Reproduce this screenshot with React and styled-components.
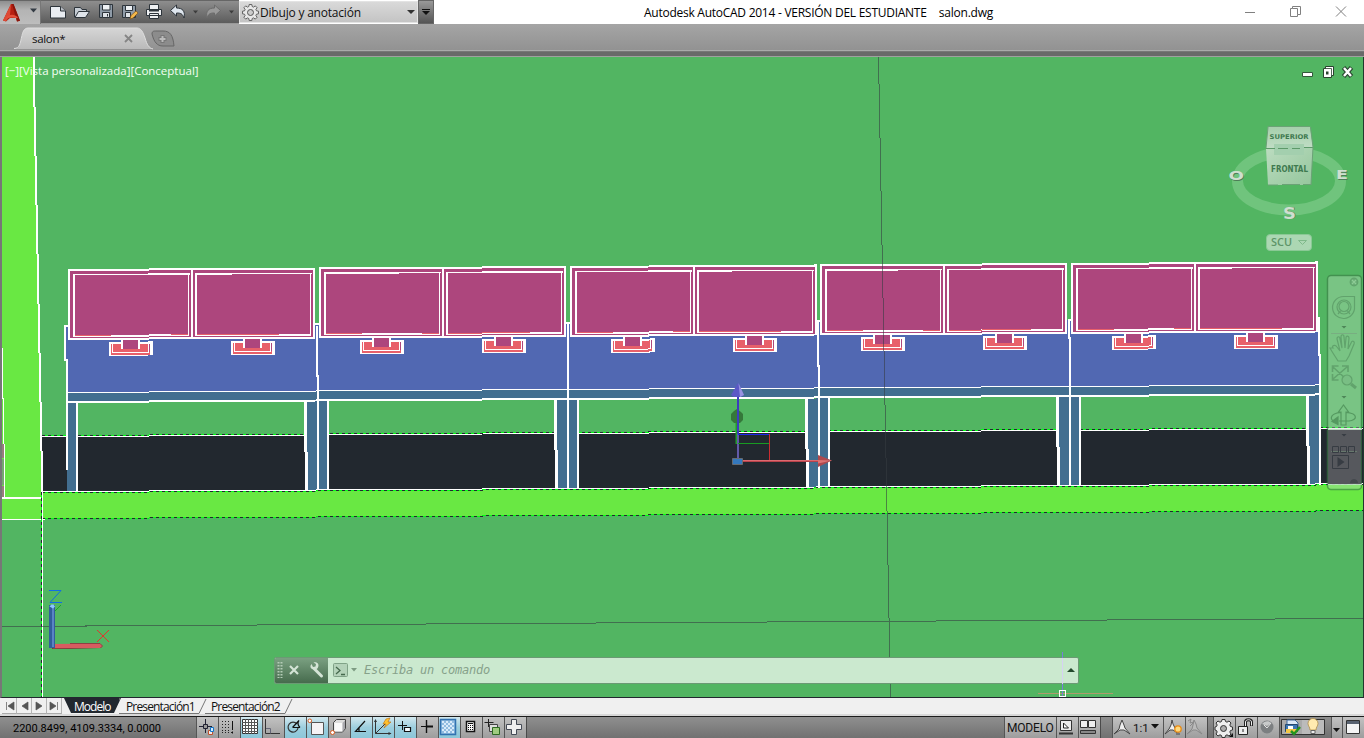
import React from "react";
import styled, { createGlobalStyle, css } from "styled-components";

const Global = createGlobalStyle`
  * { box-sizing: border-box; }
  body { margin: 0; overflow: hidden; background: #fff; }
  svg { display: block; flex: none; }
`;

const Window = styled.div`
  width: 1364px;
  height: 738px;
  display: flex;
  flex-direction: column;
  font-family: "Open Sans", "Noto Sans", sans-serif;
  font-size: 11.5px;
  color: #111;
  white-space: nowrap;
  overflow: hidden;
`;

/* ---------- title bar ---------- */
const TitleBar = styled.header`
  height: 24px;
  display: flex;
  background: #fff;
  flex: none;
`;
const AppButton = styled.div`
  width: 41px;
  height: 24px;
  border-top: 1px solid #666;
  border-right: 1px solid #777;
  background: linear-gradient(#8f8f8f, #b4b4b4 40%, #bdbdbd);
`;
const QuickAccess = styled.div`
  width: 198px;
  height: 24px;
  background: linear-gradient(#8e8e8e, #5c5c5c);
  border-top: 1px solid #666;
  border-bottom: 1px solid #999;
`;
const Workspace = styled.div`
  width: 179px;
  height: 22px;
  margin-top: 1px;
  display: flex;
  align-items: center;
  background: linear-gradient(#d9d9d9, #c4c4c4);
  border: 1px solid #e3e3e3;
  padding-left: 2px;
  font-size: 12px;
  letter-spacing: -0.2px;
  gap: 1px;
`;
const Grow = styled.span`
  flex: 1;
`;
const QuickMenu = styled.div`
  width: 16px;
  height: 24px;
  border: 1px solid #666;
  background: linear-gradient(#999, #555);
`;
const Caption = styled.div`
  display: flex;
  align-items: center;
  margin-left: 210px;
  width: 349px;
  gap: 12px;
  color: #000;
  font-size: 12px;
`;
const CaptionText = styled.span`
  letter-spacing: ${(p) => p.$spacing}px;
`;
const WindowButtons = styled.div`
  margin-left: auto;
`;

/* ---------- document tabs ---------- */
const FileTabs = styled.nav`
  height: 27px;
  flex: none;
  display: flex;
  background: linear-gradient(#a5a5a5, #929292);
  border-bottom: 1px solid #aaa;
`;
const FileTab = styled.div`
  display: grid;
  width: 178px;
  height: 26px;
  > * { grid-area: 1 / 1; }
`;
const FileTabName = styled.span`
  padding: 7px 0 0 32px;
  font-size: 11.5px;
  letter-spacing: -0.3px;
  z-index: 1;
`;
const Divider = styled.div`
  height: 6px;
  flex: none;
  background: #696969;
  border-bottom: 1px solid #a0a0a0;
  border-top: 1px solid #777;
`;

/* ---------- viewport ---------- */
const Viewport = styled.main`
  position: relative;
  height: 641px;
  flex: none;
  border-left: 2px solid #777;
  border-right: 1px solid #1e3a2c;
  border-bottom: 1px solid #22282f;
  background: #52b562;
`;
const ViewLabel = styled.div`
  position: absolute;
  left: 3px;
  top: 6px;
  color: #f4fff4;
  font-size: 11.5px;
  line-height: 16px;
  letter-spacing: 0px;
`;
const Overlay = styled.div`
  position: absolute;
  left: ${(p) => p.$x}px;
  top: ${(p) => p.$y}px;
`;
const CommandLine = styled.div`
  position: absolute;
  left: 272px;
  top: 600px;
  width: 805px;
  height: 27px;
  display: flex;
  border: 1px solid #6b9a74;
  border-radius: 2px;
  background: #cbe9cf;
  overflow: hidden;
`;
const CommandGrip = styled.div`
  width: 53px;
  background: linear-gradient(#7aa081, #466b4d);
`;
const CommandPrompt = styled.div`
  width: 33px;
`;
const CommandText = styled.span`
  flex: 1;
  font: italic 12px/24px "DejaVu Sans Mono", monospace;
  letter-spacing: -0.22px;
  color: #86a18a;
  padding-left: 3px;
`;

/* ---------- layout tabs ---------- */
const LayoutTabs = styled.div`
  height: 18px;
  flex: none;
  display: flex;
  background: #f0f0f0;
  border-bottom: 2px solid #d8d8d8;
  padding-left: 2px;
`;
const LayoutNav = styled.div`
  width: 15px;
  height: 16px;
  border-right: 1px solid #b5b5b5;
  border-bottom: 1px solid #aaa;
`;
const LayoutTab = styled.div`
  display: grid;
  width: ${(p) => p.$w}px;
  font-size: 12px;
  line-height: 17px;
  letter-spacing: ${(p) => p.$ls || -0.85}px;
  color: ${(p) => (p.$active ? "#fff" : "#111")};
  > * { grid-area: 1 / 1; }
`;
const LayoutName = styled.span`
  z-index: 1;
  padding-left: ${(p) => p.$pad}px;
`;

/* ---------- status bar ---------- */
const StatusBar = styled.footer`
  height: 22px;
  flex: none;
  display: flex;
  border-top: 1px solid #1c1c1c;
  background: linear-gradient(#8f8f8f, #717171);
`;
const Coordinates = styled.div`
  width: 196px;
  padding-left: 13px;
  font: 11px/23px Roboto, "Liberation Sans", sans-serif;
  letter-spacing: -0.01px;
  color: #000;
`;
const StatusButton = styled.div`
  width: ${(p) => p.$w || 22}px;
  height: 21px;
  overflow: hidden;
  display: flex;
  border-left: 1px solid #555;
  background: linear-gradient(#c2c2c2, #9d9d9d);
  ${(p) =>
    p.$on &&
    css`
      background: linear-gradient(#d3e8ef, #9ccede 50%, #8cc6d8);
    `}
`;
const StatusText = styled.span`
  font: ${(p) => p.$size || 12}px/22px Roboto, "Liberation Sans", sans-serif;
  padding-left: ${(p) => p.$pad || 0}px;
  letter-spacing: ${(p) => p.$ls || 0}px;
`;
const Gap = styled.div`
  width: ${(p) => p.$w}px;
  border-left: 1px solid #4a4a4a;
`;
const Tray = styled.div`
  width: 52px;
  border-left: 1px solid #555;
`;

/* ---------- drawing ---------- */
const GREEN = "#52b562", LIME = "#69e843", DARK = "#22282f";
const MAGENTA = "#ad467d", BLUE = "#5168b2", TEAL = "#426e90", PINK = "#e8606a";

function Bracket({ x }) {
  return (
    <g>
      <path d={`M${x} 342h44v14h-44z`} fill="#fff" />
      <path d={`M${x + 2} 344h39v11h-39z`} fill={PINK} />
      <path d={`M${x + 3} 344h1v9h-1zM${x + 39} 344h1v9h-1zM${x + 3} 352h37v1h-37z`} fill="#fff" />
      <path d={`M${x + 40} 344h1v8h-1z`} fill={MAGENTA} />
      <path d={`M${x + 12} 340h19v9h-19z`} fill="#fff" />
      <path d={`M${x + 14} 340h15v9h-15z`} fill={MAGENTA} />
      <path d={`M${x + 10} 339h23v1h-23z`} fill="#fff" />
    </g>
  );
}

function Bench({ x }) {
  return (
    <g>
      <path d={`M${x} 269h247v71h-247z`} fill="#fff" />
      <path d={`M${x + 2} 271h121v67h-121zM${x + 125} 271h120v67h-120z`} fill={MAGENTA} />
      <path d={`M${x + 5} 274h117v1.500h-117zM${x + 5} 274h2v62h-2zM${x + 120} 274h1v62h-1zM${x + 5} 335h116v2h-116z`} fill="#fff" />
      <path d={`M${x + 127} 274h117v1.500h-117zM${x + 127} 274h2v62h-2zM${x + 242} 274h1v62h-1zM${x + 127} 335h116v2h-116z`} fill="#fff" />
      <path d={`M${x + 7} 335h36v1h-36zM${x + 103} 335h17v1h-17zM${x + 129} 335h82v1h-82z`} fill={PINK} />
      <Bracket x={x + 41} />
      <Bracket x={x + 163} />
    </g>
  );
}

const legs = [65, 316, 566, 817, 1068, 1318];
const benches = [68, 319, 570, 820, 1071];

function Scene() {
  return (
    <svg width="1361" height="640" viewBox="2 57 1361 640" shapeRendering="crispEdges">
      <path d="M2 57h1361v640H2z" fill={GREEN} />
      <g transform="matrix(1 -0.006 0 1 0 0.4)">
        <path d="M42 436h1325v56H42z" fill={DARK} />
        <path d="M42 492h1325v27H42z" fill={LIME} />
        <path d="M42 436h1325v1H42zM42 491h1325v1H42z" fill="#fff" />
        <path d="M42 435.5h1325M42 492.5h1325M42 518.5h1325" stroke="#00ff12" />
        <path d="M42 435.5h1325M42 492.5h1325M42 518.5h1325" stroke={DARK} strokeDasharray="3 3" />
        <path d="M66 326h1253v66H66z" fill={BLUE} />
        <path d="M66 392h1254v11H66z" fill={TEAL} />
        <path d="M66 392h1254v1H66zM66 401h1254v2H66z" fill="#fff" />
        <path d="M64 326h4M315 326h4M566 326h4M817 326h4M1068 326h3M1317 326h3" stroke="#fff" strokeWidth="2" />
        {legs.map((x, i) => (
          <g key={x}>
            {i > 0 && <path d={`M${x - 12} 403h3v50h1v38h-3v-38h-1z`} fill="#fff" />}
            {i > 0 && <path d={`M${x - 9} 403h11v88h-10v-38h-1z`} fill={TEAL} />}
            {i < 5 && <path d={`M${x + 2} 403h9v88h-9z`} fill={TEAL} />}
            {i < 5 && <path d={`M${x + 11} 403h2v88h-2z`} fill="#fff" />}
          </g>
        ))}
        {benches.map((x) => <Bench key={x} x={x} />)}
      </g>
      <path d="M65 326v34h2v110M317 326v50h1v114M568 322v166M818 322v44h1v122M1068.500 320v18h1v148M1318.500 318v37h1.500v130" fill="none" stroke="#fff" strokeWidth="2" />
      <path d="M2 57h31l9 442v20H2z" fill={LIME} />
      <path d="M33.500 57l9 442" stroke="#fff" strokeWidth="2" />
      <path d="M2 498h41" stroke="#fff" strokeWidth="2" />
      <path d="M2 519.500h43" stroke="#fff" />
      <path d="M2.500 348v50h1v46h1v54" stroke="#fff" fill="none" />
      <path d="M2 444h2v14H2zM2 486h2v11H2z" fill="#987c7c" />
      <path d="M2 459h2v26H2z" fill="#75a870" />
      <path d="M42.500 491v206" stroke="#fff" />
      <path d="M41.500 492v205" stroke="#00ff12" />
      <path d="M41.500 492v205" stroke={DARK} strokeDasharray="3 3" />
      <path d="M878.500 57L890.500 697M2 626.500L1363 618.500" stroke="#353d42" strokeOpacity=".58" />

      {/* gizmo */}
      <g shapeRendering="auto">
        <path d="M736.500 410v34" stroke="#239c2a" strokeWidth="2" />
        <path d="M731 414l3-3 3-2 4 3 2 2v6l-3 3h-6l-3-3z" fill="#35783a" />
        <path d="M738 395v39" stroke="#3c3dbd" strokeWidth="2" />
        <path d="M738 434v27" stroke="#6259a8" strokeWidth="2" />
        <path d="M738 434.500h31" stroke="#1c29ee" />
        <path d="M738 443.500h31" stroke="#189b22" />
        <path d="M769.500 434v27" stroke="#cc2c30" />
        <path d="M738 383l6 12-3 2h-7l-3-2z" fill="#5b58c6" />
        <path d="M738.500 383l5.500 12-4 2z" fill="#9792df" />
        <path d="M742 461h77" stroke="#b9434b" strokeWidth="2" />
        <path d="M742 460.500h77" stroke="#dc6970" />
        <path d="M818 455l14 5.500-14 6.500z" fill="#ae494d" />
        <path d="M818 460l14 .5-14 3z" fill="#dc7474" />
        <path d="M732.500 458.500h10v6h-10z" fill="#3478bd" stroke="#666b71" />
      </g>
      {/* UCS icon */}
      <g shapeRendering="auto">
        <path d="M52 647l49-1v2l-32 1H52z" fill="#783a3a" />
        <path d="M53 644l47-.5 2.500 2.500-2 2-47.500.3z" fill="#d85c60" />
        <path d="M70 643.500h30l2.500 2.500-2 2" stroke="#8e4144" fill="none" />
        <path d="M49 605h6v43h-6z" fill="#315d9c" />
        <path d="M53 606v41" stroke="#5983c4" strokeWidth="2" />
        <path d="M49.500 606.500l2-2h2l1.500 2-2 2z" fill="#8bc5ff" />
        <path d="M49 590.500h12L50 602.500h12" fill="none" stroke="#116ce5" />
        <path d="M55 611l6-6" stroke="#19a725" />
        <path d="M97 630l12 12M109 630l-12 12" stroke="#e2342e" />
      </g>
    </svg>
  );
}

function Cursor() {
  return (
    <svg width="78" height="47" viewBox="0 0 78 47" shapeRendering="crispEdges">
      <path d="M0 42.500h75" stroke="#b09a6c" />
      <path d="M24.500 1v45" stroke="#777ddc" />
      <path d="M24.500 7v26" stroke="#d6d2f3" />
      <path d="M21.500 39.500h6v6h-6z" fill="none" stroke="#fff" />
    </svg>
  );
}

function DocButtons() {
  return (
    <svg width="54" height="16" viewBox="0 0 54 16">
      <path d="M2.500 8.500h10v4h-10z" fill="#fff" stroke="#33583b" />
      <path d="M25.500 2.500h8v9h-2v2h-8v-9h2z" fill="#fff" stroke="#29432f" />
      <path d="M25 4.500h6.500v7" fill="none" stroke="#29432f" strokeWidth=".8" />
      <path d="M26 7.500h2.500v3H26z" fill="#29432f" />
      <path d="M43.500 3.500l8 9M51.500 3.500l-8 9" stroke="#29432f" strokeWidth="4.600" />
      <path d="M44 4l7 8M51 4l-7 8" stroke="#fff" strokeWidth="2.400" />
    </svg>
  );
}

function ViewCube() {
  return (
    <svg width="124" height="130" viewBox="1226 122 124 130" fontFamily="DejaVu Sans, sans-serif" fontWeight="bold">
      <defs>
        <linearGradient id="front" x1="0" y1="0" x2="1" y2="1"><stop stopColor="#bcdcc0" /><stop offset="1" stopColor="#94c69c" /></linearGradient>
        <linearGradient id="top" x1="0" y1="0" x2="0" y2="1"><stop stopColor="#a5cfac" /><stop offset="1" stopColor="#c2dec6" /></linearGradient>
      </defs>
      <ellipse cx="1289" cy="181" rx="51.500" ry="29" fill="none" stroke="#70c47d" strokeWidth="11" />
      <path d="M1268 126h42l3 22v2h-47v-3z" fill="url(#top)" />
      <path d="M1266 148h47l-2 37h-43z" fill="url(#front)" />
      <path d="M1274 144h30v11h-30z" fill="#a3cfae" />
      <path d="M1266 148.500h9M1278 148.500h10M1292 148.500h8M1304 147.500h9" stroke="#5d9969" />
      <path d="M1268 126.500h42M1268 185h10M1282 184.500h18M1303 184.500h8M1310.500 127l2.500 20-2 38M1268 127l-2 21" stroke="#6ba276" fill="none" />
      <text x="1269.500" y="139" fontSize="6.500" textLength="39" lengthAdjust="spacingAndGlyphs" fill="#3f7a50">SUPERIOR</text>
      <text x="1271" y="171.500" fontSize="8.500" textLength="37" lengthAdjust="spacingAndGlyphs" fill="#3f7a50">FRONTAL</text>
      <g fill="#4d7d57" transform="translate(.8 .8)">
        <text x="1228.500" y="180" fontSize="11.500" textLength="15.500" lengthAdjust="spacingAndGlyphs">O</text>
        <text x="1336" y="179" fontSize="11.500" textLength="12" lengthAdjust="spacingAndGlyphs">E</text>
        <text x="1283" y="218.500" fontSize="16" textLength="13" lengthAdjust="spacingAndGlyphs">S</text>
      </g>
      <g fill="#cfdfd0">
        <text x="1228.500" y="180" fontSize="11.500" textLength="15.500" lengthAdjust="spacingAndGlyphs">O</text>
        <text x="1336" y="179" fontSize="11.500" textLength="12" lengthAdjust="spacingAndGlyphs">E</text>
        <text x="1283" y="218.500" fontSize="16" textLength="13" lengthAdjust="spacingAndGlyphs">S</text>
      </g>
      <rect x="1266.500" y="234.500" width="45" height="16" rx="3.500" fill="#acd7b3" stroke="#8ac995" />
      <text x="1271" y="245.500" fontSize="11" fontFamily="Open Sans, sans-serif" fontWeight="600" fill="#5d9468" textLength="21" lengthAdjust="spacingAndGlyphs">SCU</text>
      <path d="M1298.500 240.500h8l-4 4z" fill="none" stroke="#7fb98a" />
    </svg>
  );
}

function NavBar() {
  return (
    <svg width="36" height="218" viewBox="1326 274 36 218">
      <rect x="1328" y="276" width="33" height="213" rx="3" fill="#b5dbb9" fillOpacity=".4" />
      <path d="M1328 430h33v54h-33z" fill="#56585d" />
      <rect x="1327.500" y="275.500" width="34" height="214" rx="3.500" fill="none" stroke="#397a44" strokeOpacity=".62" strokeWidth="1.500" />
      <path d="M1328 429.500h34M1328 484.500h34" stroke="#c9e6cc" strokeOpacity=".85" />
      <path d="M1331 333.500h26M1331 451.500h26" stroke="#77977d" strokeOpacity=".5" />
      <g fill="none" stroke="#61a36c" strokeWidth="1.200">
        <circle cx="1354" cy="282" r="3.800" fill="#68ac74" /><path d="M1352 280l4 4M1356 280l-4 4" stroke="#8dcb95" />
        <path d="M1354.500 296.500v10a11 11 0 1 1-11-10z" />
        <circle cx="1344" cy="307" r="7" /><circle cx="1344" cy="306.500" r="5" /><path d="M1338 314l2.500-3M1350 314l-2.500-3" />
        <path d="M1333 348c-2-2 2-4 4-1l3 4-3-12c0-3 3-3 3 0l2 9-1-11c0-3 3-3 3 0l1 11 1-10c0-3 3-2 3 0l-1 11 3-6c1-3 4-2 3 1l-5 12-3 5h-8c-3-5-6-9-8-13z" />
        <path d="M1333 367l13 12M1347 367l-14 12M1332.500 372v-6h6M1342 366h6v6M1332.500 374v6h6" strokeWidth="1.600" />
        <circle cx="1347" cy="380" r="5" fill="#79be84" /><path d="M1351 384l5 4" strokeWidth="3" />
      </g>
      <g fill="none" stroke="#559960" strokeWidth="1.200">
        <path d="M1341 412h-2.500l5-7 5 7h-2.500v13h-5zM1341 412.500c-13 1-11 9-5 9.500M1346 412.500c13 1 11 8 3 8.500h-10" />
        <path d="M1338 417l-6 4.500 6 3z" fill="#559960" />
      </g>
      <path d="M1341.500 326h5l-2.500 2.500zM1341.500 396h5l-2.500 2.500z" fill="#4e8758" />
      <path d="M1341.500 434h5l-2.500 2.500zM1337.500 457l7 5-7 5z" fill="#373c43" />
      <path d="M1332.500 446.500h6v6h-6zM1340.500 446.500h6v6h-6zM1348.500 446.500h6v6h-6zM1332.500 455.500h16v13h-16z" fill="none" stroke="#373c43" />
      <path d="M1350.500 483a3.500 3.500 0 1 1 7 0M1352 482.500h4" fill="#44494d" stroke="#44494d" />
    </svg>
  );
}

/* ---------- small icons ---------- */
function AppLogo() {
  return (
    <svg width="40" height="23" viewBox="0 1 40 23">
      <path d="M11 4L3 20.500l3 1 4-3.500h6l1 3.500 3-.8L13.500 4z" fill="#b62012" />
      <path d="M11 4L3 20.500l3 .8L10 15z" fill="#dd4a35" />
      <path d="M13.500 4L20 20.700l-3 .8L12 4z" fill="#8a150c" />
      <path d="M6 18c3-4 8-4.500 12-.5l-1 .7c-4-1-7-1-11 .8z" fill="#e4503a" />
      <path d="M30 8.500h7l-3.500 4z" fill="#333b44" />
    </svg>
  );
}
function QuickIcons() {
  return (
    <svg width="198" height="22" viewBox="41 1 198 22">
      <g stroke="#2d343b" strokeWidth="1">
        <path d="M50.500 6.500h10l5 4.500v7h-15z" fill="#e9edf2" /><path d="M60.500 6.500v4.500h5" fill="#b9bec5" />
        <path d="M74.500 17V7.500h6l1.500 2h4.500v2" fill="#c5ccd4" /><path d="M75 17.500l3.500-6H89.500l-4 6z" fill="#dfe4ea" />
        <path d="M99.500 4.500h13v13h-13z" fill="#8f9ba8" /><path d="M102.500 4.500h7.500v5.500h-7.500z" fill="#eef1f4" /><path d="M102.500 12.500h7v5h-7z" fill="#dfe3e8" /><path d="M107.500 14v2.500" />
        <path d="M122.500 5.500h13v12h-13z" fill="#8f9ba8" /><path d="M125.500 5.500h7v5h-7z" fill="#eef1f4" /><path d="M125.500 12.500h5v5h-5z" fill="#dfe3e8" />
        <path d="M149.500 9V4.500h9V9M146.500 9.500h15v6h-15zM149.500 13.500h9v5h-9z" fill="#eef0f2" /><path d="M149 10.500h10" strokeWidth="2" />
        <path d="M170.500 10.500l6-5.500v3c6 0 9 3 7.500 10-1.500-4.500-3.500-5-7.500-5v3z" fill="#dfe6ee" />
        <path d="M220.500 10.500l-6-5.500v3c-6 0-9 3-7.500 10 1.500-4.500 3.500-5 7.500-5v3z" fill="#999" stroke="#6b6b6b" />
      </g>
      <path d="M130 19l1-3.500 5-4.500 2 2-5 5z" fill="#f3b74a" stroke="#774911" strokeWidth=".6" />
      <path d="M193 10.500h5l-2.500 3zM229 10.500h5l-2.500 3z" fill="#3c3c3c" />
    </svg>
  );
}
function Gear({ size, fill = "#e8e8e8", stroke = "#555", inner = 2.6 }) {
  return (
    <svg width={size} height={size} viewBox="-0.500 0.500 17 17">
      <path d="M6.700 1h2.600l.4 2 1.300.6 1.800-1.200 1.800 1.800-1.200 1.800.6 1.300 2 .4v2.600l-2 .4-.6 1.300 1.200 1.800-1.800 1.800-1.800-1.200-1.300.6-.4 2H6.700l-.4-2L5 14.400l-1.800 1.200-1.800-1.800L2.600 12 2 10.700 0 10.300V7.700l2-.4L2.600 6 1.400 4.200l1.800-1.800L5 3.600 6.300 3z" fill={fill} stroke={stroke} strokeWidth=".9" />
      <circle cx="8" cy="9" r={inner} fill="#ccc" stroke={stroke} />
    </svg>
  );
}

const statusIcons = [
  { on: false, d: <><path d="M9.500 3v14M3 10.500h13" stroke="#223" /><path d="M7.500 8.500h4v4h-4z" fill="#999" stroke="#223" /><path d="M12.500 14.500h4v4h-4z" fill="#eee" stroke="#c0502c" /><path d="M14.500 11.500h3v4h-3z" fill="#d5eaff" stroke="#1475c5" /></> },
  { on: false, d: <><path d="M4 5.500h9M4 8.500h9M4 11.500h9M4 14.500h9" stroke="#222" strokeDasharray="1 2" /><path d="M4 16.500h10" stroke="#222" strokeDasharray="1 2" /><path d="M14.500 5v9M14.500 15.500v2" stroke="#111" /></> },
  { on: true, d: <><path d="M2.500 3.500h15v14h-15z" fill="#fff" stroke="#333" /><path d="M5.500 3v15M8.500 3v15M11.500 3v15M14.500 3v15M2 6.500h16M2 9.500h16M2 12.500h16M2 15.500h16" stroke="#555" /></> },
  { on: false, d: <><path d="M3.500 3v14.500H18" stroke="#333" fill="none" /><path d="M4 12.500h4.500v5" stroke="#667" fill="none" /></> },
  { on: true, d: <><path d="M13 8a5 5 0 1 0 1 4" fill="none" stroke="#333" strokeWidth="1.200" /><path d="M9 11.500h7M8.500 11.500L15 4.500c-2 3-1 5 1 7" stroke="#111" fill="none" strokeWidth="1.200" /></> },
  { on: true, d: <><path d="M5.500 6.500h12v12h-12z" fill="#f6f3f5" stroke="#555" /><circle cx="3.800" cy="4.800" r="1.800" fill="#fff" stroke="#d65a20" /></> },
  { on: false, d: <><path d="M5.500 6.500l3-3h9v9L14.500 16H5.500z" fill="#ddd" stroke="#444" /><path d="M6.500 7h8v8.500h-8z" fill="#fafafa" /><path d="M14.500 15.500V7l2.500-2.500v8z" fill="#a9a9ae" /><circle cx="4.500" cy="16.500" r="2" fill="#fff" stroke="#d65a20" /></> },
  { on: true, d: <path d="M15 5L5.500 15.500H16M9 12v4" fill="none" stroke="#111" strokeWidth="1.200" /> },
  { on: true, d: <><path d="M3.500 4v13.500H19M3.500 17.500L13 8" fill="none" stroke="#333" /><path d="M2 6l1.500-3L5 6M16.500 16l3 1.500-3 1.500" fill="#333" /><path d="M14 3l4-1-2 4h3l-7 6 2-4h-3z" fill="#ffc22d" stroke="#b8680c" strokeWidth=".6" /></> },
  { on: true, d: <><path d="M8.500 5v9M4 9.500h9" stroke="#111" /><path d="M10.500 11.500h6v4h-6z" fill="#f3fbff" stroke="#111" strokeWidth="1.200" /></> },
  { on: false, d: <><path d="M10.500 4v13" stroke="#111" strokeWidth="1.400" /><path d="M5 10.500h6" stroke="#111" strokeWidth="1" /><path d="M10.500 10.500h6.500" stroke="#111" strokeWidth="2" /></> },
  { on: true, d: <><path d="M2.500 3.500h15v15h-15z" fill="#91bce0" stroke="#3272b0" strokeWidth="1.500" /><path d="M4 6h12M4 10h12M4 14h12" stroke="#d8eafa" strokeWidth="2" strokeDasharray="2 2" /><path d="M4 8h12M4 12h12M4 16h12" stroke="#d8eafa" strokeWidth="2" strokeDasharray="2 2" strokeDashoffset="2" /></> },
  { on: false, d: <><path d="M6.500 5.500h8v10h-8z" fill="#fff" stroke="#111" strokeWidth="1.500" /><path d="M8 7.500h5" stroke="#111" /><path d="M8 9.500h5M8 11.500h5M8 13.500h5" stroke="#111" strokeDasharray="1 1" /></> },
  { on: false, d: <><path d="M6.500 3v8M2.500 6.500h9" stroke="#222" /><path d="M7.500 8.500h8v7h-8z" fill="#ddd" stroke="#444" /><path d="M10.500 11.500h7v7h-7z" fill="#9fcc80" stroke="#2f6a22" /></> },
  { on: false, d: <path d="M7.500 3.500h5v5h5v5h-5v5h-5v-5h-5v-5h5z" fill="#f0f0f0" stroke="#444a55" /> },
];

const Icon = ({ children, w = 21 }) => (
  <svg width={w} height="21" viewBox={`1 1 ${w} 21`}>{children}</svg>
);

const navIcons = ["M4.500 4v8M12 4v8L6 8z", "M11 4v8L5 8z", "M4 4v8l6-4z", "M3 4v8l6-4zM10.500 4v8"];

export default function App() {
  return (
    <Window>
      <Global />
      <TitleBar>
        <AppButton><AppLogo /></AppButton>
        <QuickAccess><QuickIcons /></QuickAccess>
        <Workspace>
          <Gear size={17} inner={3} />
          <span>Dibujo y anotación</span>
          <Grow />
          <svg width="12" height="8"><path d="M2 2h8L6 6z" fill="#333" /></svg>
        </Workspace>
        <QuickMenu>
          <svg width="14" height="22"><path d="M3 8.500h8" stroke="#111" /><path d="M3 10h8l-4 4z" fill="#111" /></svg>
        </QuickMenu>
        <Caption>
          <CaptionText $spacing={-0.26}>Autodesk AutoCAD 2014 - VERSIÓN DEL ESTUDIANTE</CaptionText>
          <CaptionText $spacing={-0.2}>salon.dwg</CaptionText>
        </Caption>
        <WindowButtons>
          <svg width="124" height="24" fill="none" stroke="#808080">
            <path d="M5 12.500h10M52.500 8.500h-2v8h7v-2M52.500 6.500h8v8h-3v-6h-5zM96 6.500l10 10M106 6.500l-10 10" />
          </svg>
        </WindowButtons>
      </TitleBar>
      <FileTabs>
        <FileTab>
          <svg width="178" height="26" viewBox="0 24 178 26">
            <defs><linearGradient id="tab" x1="0" y1="0" x2="0" y2="1"><stop stopColor="#d6d6d6" /><stop offset="1" stopColor="#bababa" /></linearGradient></defs>
            <path d="M14 49c6 0 6-5 8-13 1-6 3-8 6-8h109c4 0 6 4 8 10 2 7 4 10 8 11z" fill="url(#tab)" />
            <path d="M14 48.500c6 0 6-5 8-13 1-5 3-7.500 6-7.500h109c4 0 6 4 8 10 2 7 4 10 8 11" fill="none" stroke="#dedede" />
            <path d="M125 35l7 7M132 35l-7 7" stroke="#858585" strokeWidth="1.800" />
            <path d="M152 34c0-3 2-3 4-3h7c7 0 10 4 11 15h-11c-6 0-9-4-11-12z" fill="#8c8c8c" stroke="#666" />
            <path d="M162.500 35v8M158.500 39h8" stroke="#777" strokeWidth="4" /><path d="M162.500 36v6M159.500 39h6" stroke="#bbb" strokeWidth="2" />
          </svg>
          <FileTabName>salon*</FileTabName>
        </FileTab>
      </FileTabs>
      <Divider />
      <Viewport>
        <Scene />
        <ViewLabel>[−][Vista personalizada][Conceptual]</ViewLabel>
        <Overlay $x={1298} $y={7}><DocButtons /></Overlay>
        <Overlay $x={1224} $y={65}><ViewCube /></Overlay>
        <Overlay $x={1324} $y={217}><NavBar /></Overlay>
        <CommandLine>
          <CommandGrip>
            <svg width="53" height="25" viewBox="275 658 53 25">
              <path d="M278.500 662v16M281.500 662v16" stroke="#b3cbb6" strokeWidth="2" strokeDasharray="1.500 1.500" />
              <path d="M290 666l8 8M298 666l-8 8" stroke="#d4e4d6" strokeWidth="2.200" />
              <path d="M314.500 669l7 7" stroke="#d4e4d6" strokeWidth="3" strokeLinecap="round" />
              <path d="M311.500 664l1.500 3 2.500-.5.500-2.500-2.500-1.500c4-1 6 2 4.500 5-1 2-4 3-6 1.500-2-1-2-3.500-.5-5z" fill="#d4e4d6" />
            </svg>
          </CommandGrip>
          <CommandPrompt>
            <svg width="33" height="25" viewBox="328 658 33 25">
              <rect x="333.500" y="663.500" width="14" height="13" rx="1" fill="#b4d2b9" stroke="#80a287" />
              <path d="M336 667l4 3.500-4 3.500M341 674.500h4" fill="none" stroke="#45694d" strokeWidth="1.300" />
              <path d="M351 668h6l-3 3.500z" fill="#7d9b82" />
            </svg>
          </CommandPrompt>
          <CommandText>Escriba un comando</CommandText>
          <svg width="13" height="25"><path d="M2 14h8l-4-4z" fill="#24492d" /></svg>
        </CommandLine>
        <Overlay $x={1036} $y={594}><Cursor /></Overlay>
      </Viewport>
      <LayoutTabs>
        {navIcons.map((d) => (
          <LayoutNav key={d}><svg width="14" height="16"><path d={d} fill="#555" stroke="#555" strokeWidth=".7" /></svg></LayoutNav>
        ))}
        <LayoutTab $w={57} $active $ls={-0.95}>
          <svg width="62" height="16"><path d="M2 0h57l-7 15H9z" fill={DARK} /></svg>
          <LayoutName $pad={12}>Modelo</LayoutName>
        </LayoutTab>
        <LayoutTab $w={86}>
          <svg width="88" height="17"><path d="M1 0L-6 15.500h86L87 1" fill="none" stroke="#777" /></svg>
          <LayoutName $pad={7}>Presentación1</LayoutName>
        </LayoutTab>
        <LayoutTab $w={90}>
          <svg width="90" height="17"><path d="M-2 15.500h82L87 1" fill="none" stroke="#777" /></svg>
          <LayoutName $pad={6}>Presentación2</LayoutName>
        </LayoutTab>
      </LayoutTabs>
      <StatusBar>
        <Coordinates>2200.8499, 4109.3334, 0.0000</Coordinates>
        {statusIcons.map((s, i) => (
          <StatusButton key={i} $on={s.on}><Icon>{s.d}</Icon></StatusButton>
        ))}
        <Gap $w={478} />
        <StatusButton $w={52}><StatusText $pad={2} $ls={-0.2}>MODELO</StatusText></StatusButton>
        <StatusButton>
          <Icon><path d="M4.500 4.500h11v10h-11z" fill="#eee" stroke="#333" /><path d="M7.500 7v5h5z" fill="#fff" stroke="#222" /><path d="M3 17.500h14" stroke="#333" strokeWidth="2" /></Icon>
        </StatusButton>
        <StatusButton>
          <Icon><path d="M2.500 4.500h7v7h-7zM10.500 4.500h7v7h-7z" fill="#eee" stroke="#333" /><path d="M2.500 14.500h15v3h-15z" fill="#888" stroke="#333" /></Icon>
        </StatusButton>
        <Gap $w={12} />
        <StatusButton $w={51}>
          <Icon w={18}><path d="M10 4l2 5 1 3 5 6-6-4H8l-6 4 5-5 1-4z" fill="#eee" stroke="#444" /></Icon>
          <StatusText $pad={2} $size={11.5}>1:1</StatusText>
          <Icon w={12}><path d="M3 8h8l-4 4.500z" fill="#111" /></Icon>
        </StatusButton>
        <StatusButton>
          <Icon><path d="M9 4l1 4 2 4 4 6-6-4H7l-5 4 4-5 2-4z" fill="#eee" stroke="#444" /><circle cx="15" cy="13" r="3.200" fill="#ffd97c" stroke="#e88a14" strokeWidth="1.300" /><path d="M13 17h4v2h-4z" fill="#777" /></Icon>
        </StatusButton>
        <StatusButton>
          <Icon><path d="M9 4l2 4 1 4 5 6-6-4H8l-6 4 5-5 1-4zM3 5l3-2-1 4 4-1-4 4" fill="#bbb" stroke="#888" /></Icon>
        </StatusButton>
        <Gap $w={6} />
        <StatusButton>
          <svg width="21" height="21" viewBox="-1 -1 21 21"><path d="M7 1.500h3l.5 2 1.500.7 2-1.200 2 2-1.200 2 .7 1.500 2 .5v3l-2 .5-.7 1.500 1.200 2-2 2-2-1.200-1.500.7-.5 2H7l-.5-2-1.500-.7-2 1.200-2-2L2.200 14l-.7-1.500-1.500-.5V9l1.500-.5L2.200 7 1 5l2-2 2 1.200 1.500-.7z" fill="#eee" stroke="#333" /><circle cx="8.500" cy="10.500" r="3" fill="#aaa" stroke="#333" /><path d="M18 15v4h-4z" fill="#111" /></svg>
        </StatusButton>
        <StatusButton>
          <Icon><path d="M3.500 10.500h9v8h-9z" fill="#eee" stroke="#222" /><path d="M10.500 10V6c0-3 6-3 6 0v4" fill="none" stroke="#222" strokeWidth="3" /><path d="M10.500 10V6c0-3 6-3 6 0v3.500" fill="none" stroke="#eee" /><path d="M8 13v3" stroke="#222" /></Icon>
        </StatusButton>
        <StatusButton>
          <Icon><circle cx="10" cy="11" r="6.500" fill="#7c7f81" /><path d="M5 8c2-3 7-4 9-1l-4 3z" fill="#c8caca" /><path d="M7 9l3 3 4-5" fill="none" stroke="#e4e4e4" /></Icon>
        </StatusButton>
        <Tray>
          <svg width="51" height="21" viewBox="0 1 51 21">
            <path d="M1.500 3.500h43v15h-43z" fill="#aaa" stroke="#333" /><path d="M22 4h22v14H22z" fill="#bbb" />
            <path d="M7 4h8l3 3v5H7z" fill="#dce9f8" stroke="#3e6798" /><path d="M5.500 8.500h12v7h-12z" fill="#3c77b4" stroke="#24486f" /><path d="M8 10h5v3H8z" fill="#fff" /><path d="M6 13h11v4H6z" fill="#f4c844" />
            <path d="M11 15l3 3 6-7" stroke="#239420" strokeWidth="2.500" fill="none" />
            <path d="M30 14c0-3-2-4-2-6.500a5 5 0 0 1 10 0c0 2.500-2 3.500-2 6.500z" fill="#ffeab0" stroke="#a78339" strokeWidth=".7" /><path d="M31 14.500h4v3h-4z" fill="#eee" stroke="#666" />
          </svg>
        </Tray>
        <StatusButton $w={11}><svg width="10" height="21"><path d="M1 11h7l-3.500 4z" fill="#111" /></svg></StatusButton>
        <StatusButton><Icon><path d="M4.500 4.500h13v13h-13z" fill="#f5f5f5" stroke="#333" /><path d="M5 5h12v3H5z" fill="#596371" /></Icon></StatusButton>
      </StatusBar>
    </Window>
  );
}
